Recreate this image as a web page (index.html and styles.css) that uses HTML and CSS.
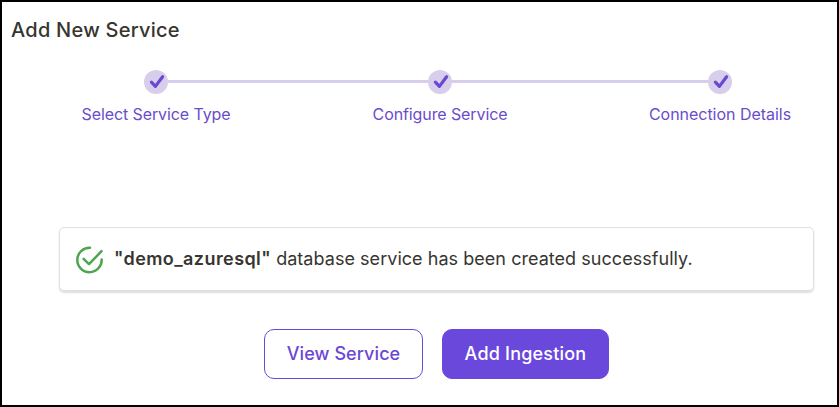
FILE: index.html
```html
<!DOCTYPE html>
<html lang="en">
<head>
<meta charset="utf-8">
<title>Add New Service</title>
<link rel="stylesheet" href="styles.css">
</head>
<body>
<main class="page">
  <h1 class="title">Add New Service</h1>
  <div class="stepper">
    <div class="step">
      <span class="dot"><svg viewBox="0 0 24 24"><path d="M7.4 12.2l4 4.2L18.6 6.8"/></svg></span>
      <span class="label">Select Service Type</span>
    </div>
    <span class="line line-a"></span>
    <div class="step">
      <span class="dot"><svg viewBox="0 0 24 24"><path d="M7.4 12.2l4 4.2L18.6 6.8"/></svg></span>
      <span class="label">Configure Service</span>
    </div>
    <span class="line line-b"></span>
    <div class="step">
      <span class="dot"><svg viewBox="0 0 24 24"><path d="M7.4 12.2l4 4.2L18.6 6.8"/></svg></span>
      <span class="label label-last">Connection Details</span>
    </div>
  </div>
  <section class="card">
    <svg class="ok" viewBox="0 0 28 28"><path d="M25.7 13.6A12.2 12.2 0 1 1 14 1.8"/><path d="M7.6 12.8l5.4 5.4L25.5 5.2"/></svg>
    <p class="message"><strong>"demo_azuresql"</strong> <span class="rest">database service has been created successfully.</span></p>
  </section>
  <div class="actions">
    <button class="btn outline"><span>View Service</span></button>
    <button class="btn primary"><span>Add Ingestion</span></button>
  </div>
</main>
</body>
</html>
```
FILE: styles.css
```css
* { box-sizing: border-box; }
body { margin: 0; font-family: Inter, sans-serif; color: #37352f; background: #fff; }
.page { width: 839px; height: 407px; border: 2px solid #000; overflow: hidden; }
.title { margin: 15px 0 0 9px; font-size: 20px; font-weight: 500; line-height: 26px; letter-spacing: .25px; }
.stepper { display: flex; align-items: flex-start; margin: 27px 0 0 142px; }
.step { width: 24px; display: flex; flex-direction: column; align-items: center; }
.dot { width: 24px; height: 24px; border-radius: 50%; background: #d7ceeb; }
.dot svg { display: block; width: 24px; height: 24px; fill: none; stroke: #6b48d4; stroke-width: 3.2; stroke-linecap: round; stroke-linejoin: round; }
.label { margin-top: 10px; font-size: 16px; line-height: 20px; letter-spacing: -.1px; white-space: nowrap; color: #6b4ccb; }
.label-last { letter-spacing: -.03px; }
.line { height: 3px; margin-top: 10px; background: #d7ceeb; }
.line-a { width: 260px; }
.line-b { width: 256px; }
.card { display: flex; align-items: center; width: 755px; height: 64px; margin: 103px 0 0 57px; padding-left: 16px; border: 1px solid #dcdfe6; border-radius: 5px; box-shadow: 0 2px 2px rgba(0,0,0,.13); }
.ok { width: 28px; height: 28px; margin-top: 2px; fill: none; stroke: #4ea54e; stroke-width: 2.5; stroke-linecap: round; stroke-linejoin: round; }
.message { margin: 0 0 0 10px; font-size: 18px; line-height: 24px; white-space: nowrap; }
.message strong { font-weight: 600; letter-spacing: .42px; }
.rest { letter-spacing: .04px; }
.actions { display: flex; gap: 19px; margin: 38px 0 0 262px; }
.btn { height: 50px; padding: 0 0 2px; border: 1px solid #6b48dc; border-radius: 10px; font: 500 18px Inter, sans-serif; white-space: nowrap; }
.outline { width: 159px; letter-spacing: .08px; background: #fff; color: #6b48d4; }
.primary { width: 167px; letter-spacing: .2px; background: #6b48dc; color: #fff; }
```
